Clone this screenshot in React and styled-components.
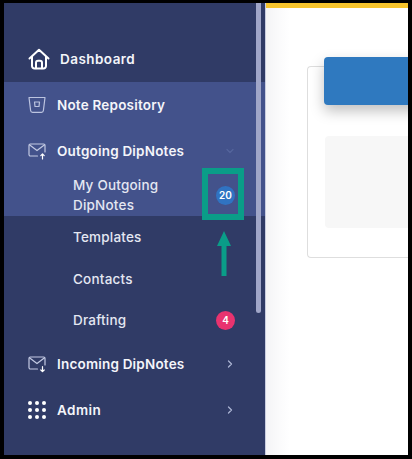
import React from "react";
import styled, { createGlobalStyle } from "styled-components";

const HomeIcon = () => (
  <svg width="22" height="22" viewBox="0 0 22 22" fill="none" stroke="#fff" strokeWidth="2" strokeLinejoin="round" strokeLinecap="round">
    <path d="M1.5 10.5 11 1.8l9.5 8.7M4 8.6V18a2.4 2.4 0 0 0 2.4 2.4h9.2A2.4 2.4 0 0 0 18 18V8.6" />
    <path d="M8 20.2v-5.4a2 2 0 0 1 2-2h2a2 2 0 0 1 2 2v5.4" />
  </svg>
);

const BucketIcon = () => (
  <svg width="18" height="18" viewBox="0 0 18 18" fill="none" stroke="#bcc4e0" strokeWidth="1.2" strokeLinejoin="round">
    <path d="M1 1.5h16l-1.6 13a2 2 0 0 1-2 1.8H4.6a2 2 0 0 1-2-1.8z" />
    <path d="M6.5 6h5l-.5 4.5H7z" />
  </svg>
);

const MailIcon = ({ down }) => (
  <svg width="18" height="17" viewBox="0 0 18 17" fill="none" stroke="#c3cae3" strokeWidth="1.2" strokeLinejoin="round" strokeLinecap="round">
    <path d="M9.5 13H2.4A1.4 1.4 0 0 1 1 11.6V2.4A1.4 1.4 0 0 1 2.4 1h13.2A1.4 1.4 0 0 1 17 2.4V9" />
    <path d="M1.4 1.8 9 7.6l7.6-5.8" />
    {down ? (
      <path d="M14.5 10.5v5M12.8 14l1.7 1.7 1.7-1.7" stroke="#fff" />
    ) : (
      <path d="M14.5 16v-5M12.8 12.7 14.5 11l1.7 1.7" stroke="#fff" />
    )}
  </svg>
);

const GridIcon = () => (
  <svg width="18" height="18" viewBox="0 0 18 18" fill="#fff">
    {[2, 9, 16].flatMap((y) =>
      [2, 9, 16].map((x) => <circle key={`${x}-${y}`} cx={x} cy={y} r="2" />)
    )}
  </svg>
);

const Chevron = ({ open }) => (
  <svg width="10" height="10" viewBox="0 0 10 10" fill="none" stroke={open ? "#55659c" : "#aab3d2"} strokeWidth="1.3" strokeLinecap="round" strokeLinejoin="round">
    <path d={open ? "M2 3.5 5 6.5l3-3" : "M3.5 2 6.5 5l-3 3"} />
  </svg>
);

const App = () => (
  <>
    <GlobalStyles />
    <Frame>
      <Sidebar>
        <Row $pad={24} $gap={10}>
          <IconSlot $w={22}><HomeIcon /></IconSlot>
          <RowLabel $spacing={0.45}>Dashboard</RowLabel>
        </Row>
        <ActiveGroup>
          <Row $pad={23} $gap={11}>
            <IconSlot $w={19}><BucketIcon /></IconSlot>
            <RowLabel>Note Repository</RowLabel>
          </Row>
          <Row $pad={23} $gap={11}>
            <IconSlot $w={19}><MailIcon /></IconSlot>
            <RowLabel>Outgoing DipNotes</RowLabel>
            <ChevronSlot><Chevron open /></ChevronSlot>
          </Row>
          <SubRow>
            <SubLabel>My Outgoing<br />DipNotes</SubLabel>
            <Badge>20</Badge>
          </SubRow>
        </ActiveGroup>
        <SubRow>
          <SubLabel>Templates</SubLabel>
        </SubRow>
        <SubRow $short>
          <SubLabel>Contacts</SubLabel>
        </SubRow>
        <SubRow>
          <SubLabel>Drafting</SubLabel>
          <Badge $pink>4</Badge>
        </SubRow>
        <Row $pad={23} $gap={11}>
          <IconSlot $w={19}><MailIcon down /></IconSlot>
          <RowLabel>Incoming DipNotes</RowLabel>
          <ChevronSlot><Chevron /></ChevronSlot>
        </Row>
        <Row $pad={23} $gap={11}>
          <IconSlot $w={19}><GridIcon /></IconSlot>
          <RowLabel $spacing={0.45}>Admin</RowLabel>
          <ChevronSlot><Chevron /></ChevronSlot>
        </Row>
        <ScrollThumb />
        <Callout />
        <CalloutArrow width="14" height="45" viewBox="0 0 14 45">
          <path d="M7 0 14 15H9.5V45H4.5V15H0z" fill="#0a9d88" />
        </CalloutArrow>
      </Sidebar>
      <Main>
        <TopStripe />
        <Card>
          <CardHeader />
          <CardBody />
        </Card>
      </Main>
    </Frame>
  </>
);

const GlobalStyles = createGlobalStyle`
  html, body {
    margin: 0;
    padding: 0;
    background: #000;
  }

  body {
    font-family: Inter, "Noto Sans", sans-serif;
  }
`;

const Frame = styled.div`
  box-sizing: border-box;
  width: 412px;
  height: 459px;
  border: solid #000;
  border-width: 3px 4px 4px 4px;
  display: flex;
  overflow: hidden;
`;

const Sidebar = styled.nav`
  position: relative;
  box-sizing: border-box;
  flex: 0 0 261px;
  padding-top: 33px;
  background: #303b66;
  color: #fff;
`;

const ActiveGroup = styled.div`
  background: #43528b;
`;

const Row = styled.div`
  display: flex;
  align-items: center;
  height: 46px;
  padding-left: ${(p) => p.$pad}px;
  gap: ${(p) => p.$gap}px;
`;

const IconSlot = styled.span`
  display: flex;
  justify-content: center;
  width: ${(p) => p.$w}px;
`;

const RowLabel = styled.span`
  font-size: 13.5px;
  font-weight: 600;
  letter-spacing: ${(p) => p.$spacing || 0.2}px;
  color: #f4f5fa;
  white-space: nowrap;
`;

const ChevronSlot = styled.span`
  display: flex;
  position: absolute;
  left: 221px;
`;

const SubRow = styled.div`
  display: flex;
  align-items: center;
  justify-content: space-between;
  box-sizing: border-box;
  min-height: ${(p) => (p.$short ? 41 : 42)}px;
  padding: 0 30px 0 69px;
`;

const SubLabel = styled.span`
  font-size: 13.5px;
  font-weight: 500;
  letter-spacing: 0.2px;
  line-height: 20px;
  color: #e4e7f2;
`;

const Badge = styled.span`
  display: flex;
  align-items: center;
  justify-content: center;
  width: 19px;
  height: 19px;
  border-radius: 50%;
  font-size: 10px;
  font-weight: 600;
  color: #fff;
  background: ${(p) => (p.$pink ? "#e8336f" : "#3073c2")};
`;

const ScrollThumb = styled.div`
  position: absolute;
  top: 0;
  left: 252px;
  width: 5px;
  height: 310px;
  border-radius: 0 0 3px 3px;
  background: #a0a6c8;
`;

const Callout = styled.div`
  position: absolute;
  top: 165px;
  left: 198px;
  box-sizing: border-box;
  width: 42px;
  height: 52px;
  border: 6px solid #0a9d88;
`;

const CalloutArrow = styled.svg`
  position: absolute;
  top: 228px;
  left: 213px;
`;

const Main = styled.main`
  position: relative;
  flex: 1;
  background: linear-gradient(90deg, #f4f4f6 0, #fbfbfc 14px, #fff 24px);
  overflow: hidden;
  border-left: 1px solid #c9cde0;
`;

const TopStripe = styled.div`
  height: 5px;
  background: #f7c42c;
`;

const Card = styled.section`
  position: relative;
  box-sizing: border-box;
  margin: 58px 0 0 41px;
  width: 140px;
  height: 192px;
  padding: 69px 0 0 17px;
  border: 1px solid #dedede;
  border-right: none;
  border-radius: 4px 0 0 4px;
`;

const CardHeader = styled.div`
  position: absolute;
  top: -10px;
  left: 16px;
  width: 120px;
  height: 48px;
  border-radius: 4px 0 0 4px;
  background: #2f79bf;
  box-shadow: 0 6px 14px rgba(0, 0, 0, 0.25);
`;

const CardBody = styled.div`
  height: 92px;
  border-radius: 4px 0 0 4px;
  background: #f7f7f7;
`;

export default App;
